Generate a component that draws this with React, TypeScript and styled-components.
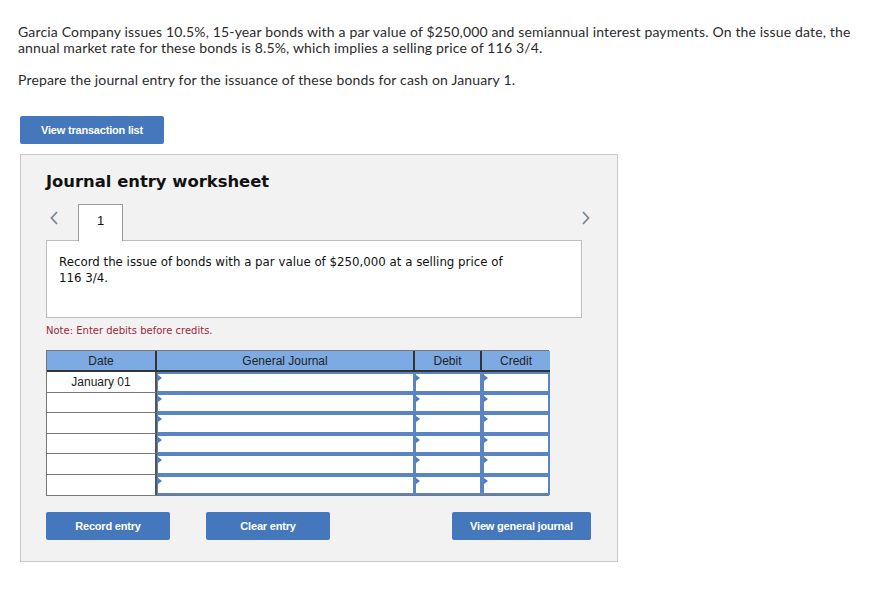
import React from "react";
import styled, { createGlobalStyle } from "styled-components";

const GlobalStyle = createGlobalStyle`
  body {
    margin: 0;
    background: #ffffff;
    font-family: "Lato", "Liberation Sans", sans-serif;
    color: #222;
  }
`;

const Page = styled.div`
  padding: 24px 18px 40px 18px;
  width: 892px;
  box-sizing: border-box;
`;

const Para = styled.p<{ gap?: number }>`
  margin: 0 0 ${(p) => p.gap ?? 0}px 0;
  font-size: 14px;
  line-height: 16px;
  letter-spacing: 0.16px;
  color: #2b2b2b;
  width: 850px;
`;

const BlueButton = styled.button<{ w: number }>`
  width: ${(p) => p.w}px;
  height: 28px;
  background: #4577bc;
  border: none;
  border-radius: 2px;
  color: #fff;
  font-family: "Liberation Sans", Arial, sans-serif;
  font-weight: bold;
  font-size: 11px;
  letter-spacing: -0.2px;
  padding: 0;
`;

const TopActions = styled.div`
  margin: 28px 0 10px 2px;
`;

const Panel = styled.section`
  margin-left: 2px;
  width: 598px;
  height: 408px;
  box-sizing: border-box;
  background: #f2f2f2;
  border: 1px solid #c8c8c8;
  padding: 17px 25px 0 25px;
`;

const Title = styled.h2`
  margin: 0 0 10px 0;
  font-family: "DejaVu Sans", Verdana, sans-serif;
  font-weight: bold;
  font-size: 16.4px;
  line-height: 20px;
  color: #111;
`;

const TabRow = styled.div`
  display: flex;
  align-items: flex-end;
  height: 38px;
`;

const Arrow = styled.span<{ right?: boolean }>`
  width: 32px;
  height: 24px;
  box-sizing: border-box;
  display: flex;
  align-items: center;
  justify-content: ${(p) => (p.right ? "flex-end" : "flex-start")};
  padding-left: ${(p) => (p.right ? 0 : 3)}px;
  align-self: center;
  margin-top: -6px;
  ${(p) => (p.right ? "margin-left: auto; margin-right: 1px;" : "")}
`;

const Tab = styled.div`
  width: 45px;
  height: 37px;
  box-sizing: border-box;
  background: #fff;
  border: 1px solid #9a9a9a;
  border-bottom: none;
  display: flex;
  justify-content: center;
  padding-top: 8px;
  font-family: "Liberation Sans", Arial, sans-serif;
  font-size: 13px;
  color: #111;
  margin-bottom: -1px;
  position: relative;
  z-index: 1;
`;

const Prompt = styled.div`
  width: 536px;
  height: 78px;
  box-sizing: border-box;
  background: #fff;
  border: 1px solid #bdbdbd;
  padding: 13px 12px 0 12px;
  font-family: "DejaVu Sans", Verdana, Tahoma, sans-serif;
  font-size: 11.8px;
  line-height: 16px;
  color: #111;
`;

const PromptText = styled.div`
  width: 450px;
`;

const Note = styled.div`
  margin: 7px 0 14px 0;
  font-family: "DejaVu Sans", Verdana, sans-serif;
  font-size: 10px;
  color: #a3263c;
`;

const Grid = styled.div`
  width: 503px;
  display: grid;
  grid-template-columns: 110px 258px 67px 68px;
  grid-template-rows: 21px repeat(6, 20.5px);
  border: 1px solid #777;
  box-sizing: border-box;
  font-family: "Liberation Sans", Arial, sans-serif;
  font-size: 12px;
  color: #222;
`;

const Head = styled.div<{ last?: boolean }>`
  background: #7daae2;
  border-bottom: 2px solid #333;
  border-right: ${(p) => (p.last ? "none" : "2px solid #333")};
  display: flex;
  align-items: center;
  justify-content: center;
  box-sizing: border-box;
`;

const DateCell = styled.div`
  box-sizing: border-box;
  background: #fff;
  border-bottom: 1px solid #777;
  border-right: 2px solid #555;
  display: flex;
  align-items: center;
  justify-content: center;
  &:nth-last-child(4) {
    border-bottom: none;
  }
`;

const InputCell = styled.div<{ last?: boolean }>`
  box-sizing: border-box;
  background: #fff;
  border: 2px solid #5b84c4;
  border-left-width: ${(p) => (p.last ? 2 : 1)}px;
  position: relative;
  &::before {
    content: "";
    position: absolute;
    left: 0;
    top: 1px;
    border-left: 4px solid #4a7cc8;
    border-top: 3px solid transparent;
    border-bottom: 3px solid transparent;
  }
`;

const Actions = styled.div`
  display: flex;
  margin-top: 16px;
  gap: 36px;
`;

const Spacer = styled.div`
  flex: 1;
`;

const ChevronLeft = () => (
  <svg width="10" height="16" viewBox="0 0 10 16">
    <path d="M8 2 L2.5 8 L8 14" fill="none" stroke="#7a8595" strokeWidth="1.8" />
  </svg>
);

const ChevronRight = () => (
  <svg width="10" height="16" viewBox="0 0 10 16">
    <path d="M2 2 L7.5 8 L2 14" fill="none" stroke="#7a8595" strokeWidth="1.8" />
  </svg>
);

const rows = ["January 01", "", "", "", "", ""];

const App: React.FC = () => {
  return (
    <Page>
      <GlobalStyle />
      <Para gap={16}>
        Garcia Company issues 10.5%, 15-year bonds with a par value of $250,000 and semiannual
        interest payments. On the issue date, the annual market rate for these bonds is 8.5%,
        which implies a selling price of 116 3/4.
      </Para>
      <Para>Prepare the journal entry for the issuance of these bonds for cash on January 1.</Para>
      <TopActions>
        <BlueButton w={144}>View transaction list</BlueButton>
      </TopActions>
      <Panel>
        <Title>Journal entry worksheet</Title>
        <TabRow>
          <Arrow>
            <ChevronLeft />
          </Arrow>
          <Tab>1</Tab>
          <Arrow right>
            <ChevronRight />
          </Arrow>
        </TabRow>
        <Prompt>
          <PromptText>
            Record the issue of bonds with a par value of $250,000 at a selling price of 116 3/4.
          </PromptText>
        </Prompt>
        <Note>Note: Enter debits before credits.</Note>
        <Grid>
          <Head>Date</Head>
          <Head>General Journal</Head>
          <Head>Debit</Head>
          <Head last>Credit</Head>
          {rows.map((d, i) => (
            <React.Fragment key={i}>
              <DateCell>{d}</DateCell>
              <InputCell />
              <InputCell />
              <InputCell last />
            </React.Fragment>
          ))}
        </Grid>
        <Actions>
          <BlueButton w={124}>Record entry</BlueButton>
          <BlueButton w={124}>Clear entry</BlueButton>
          <Spacer />
          <BlueButton w={139} style={{ marginRight: 1 }}>View general journal</BlueButton>
        </Actions>
      </Panel>
    </Page>
  );
};

export default App;
